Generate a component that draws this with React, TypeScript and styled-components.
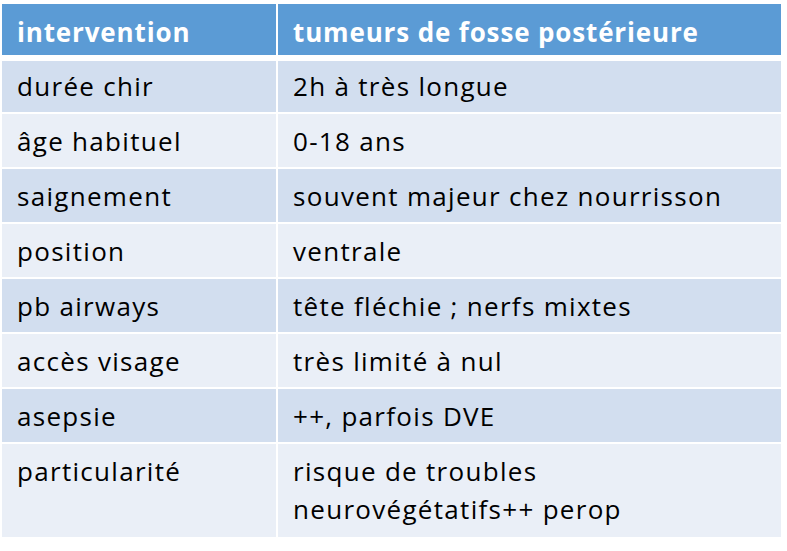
import styled, {createGlobalStyle} from 'styled-components';

const GlobalStyle = createGlobalStyle`
  body {
    margin: 0;
    background: #fff;
    font-family: "Open Sans", "Noto Sans", sans-serif;
  }
`;

const rows: [string, string[]][] = [
  ['durée chir', ['2h à très longue']],
  ['âge habituel', ['0-18 ans']],
  ['saignement', ['souvent majeur chez nourrisson']],
  ['position', ['ventrale']],
  ['pb airways', ['tête fléchie ; nerfs mixtes']],
  ['accès visage', ['très limité à nul']],
  ['asepsie', ['++, parfois DVE']],
  ['particularité', ['risque de troubles', 'neurovégétatifs++ perop']],
];

const App: React.FC = () => {
  return (
    <>
      <GlobalStyle />
      <Page>
        <Table>
          <HeadCell>intervention</HeadCell>
          <HeadCell>tumeurs de fosse postérieure</HeadCell>
          {rows.map(([label, lines], i) => (
            <Row key={label} $odd={i % 2 === 0} $tall={lines.length > 1} $first={i === 0}>
              <Cell>{label}</Cell>
              <Cell>
                {lines.map((l) => (
                  <div key={l}>{l}</div>
                ))}
              </Cell>
            </Row>
          ))}
        </Table>
      </Page>
    </>
  );
};

const Page = styled.div`
  padding: 4px 0 0 2px;
`;

const Table = styled.div`
  display: grid;
  grid-template-columns: 274px 503px;
  column-gap: 2px;
  row-gap: 2px;
  width: 779px;
`;

const HeadCell = styled.div`
  box-sizing: border-box;
  background-color: #5b9bd5;
  color: #fff;
  font-weight: 700;
  font-size: 26px;
  letter-spacing: 0.85px;
  height: 51px;
  line-height: 51px;
  padding: 3px 0 0 15px;
  margin-bottom: 4px;
`;

const Row = styled.div<{$odd: boolean; $tall: boolean; $first: boolean}>`
  display: contents;

  & > div {
    background-color: ${(p) => (p.$odd ? '#d2deef' : '#eaeff7')};
    height: ${(p) => (p.$tall ? '93px' : p.$first ? '51px' : '53px')};
    padding-top: ${(p) => (p.$first ? '6px' : '8px')};
  }
`;

const Cell = styled.div`
  box-sizing: border-box;
  padding: 8px 0 0 15px;
  color: #000;
  font-size: 26px;
  line-height: 38px;
  letter-spacing: 1.3px;
`;

export default App;
